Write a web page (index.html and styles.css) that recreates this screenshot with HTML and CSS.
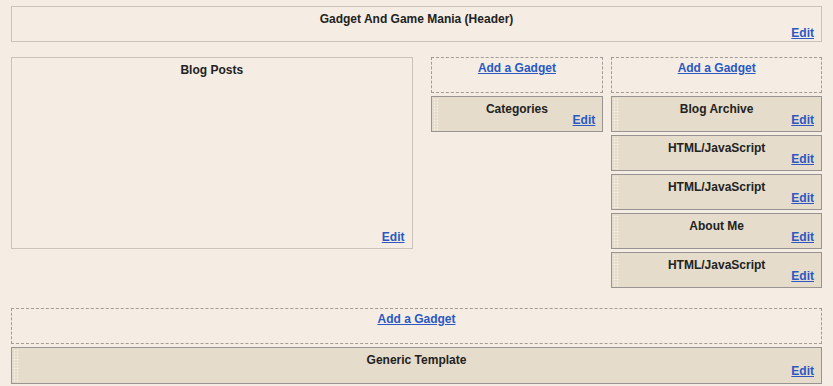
FILE: index.html
```html
<!DOCTYPE html>
<html>
<head>
<meta charset="utf-8">
<link rel="stylesheet" href="styles.css">
</head>
<body>
<div class="page">
  <div class="section header">
    <div class="title">Gadget And Game Mania (Header)</div>
    <div class="edit-row"><a class="edit" href="#">Edit</a></div>
  </div>
  <div class="main">
    <div class="section posts">
      <div class="title">Blog Posts</div>
      <div class="edit-row"><a class="edit" href="#">Edit</a></div>
    </div>
    <div class="col mid">
      <div class="add"><a href="#">Add a Gadget</a></div>
      <div class="widget"><div class="title">Categories</div><div class="edit-row"><a class="edit" href="#">Edit</a></div></div>
    </div>
    <div class="col side">
      <div class="add"><a href="#">Add a Gadget</a></div>
      <div class="widget"><div class="title">Blog Archive</div><div class="edit-row"><a class="edit" href="#">Edit</a></div></div>
      <div class="widget"><div class="title">HTML/JavaScript</div><div class="edit-row"><a class="edit" href="#">Edit</a></div></div>
      <div class="widget"><div class="title">HTML/JavaScript</div><div class="edit-row"><a class="edit" href="#">Edit</a></div></div>
      <div class="widget"><div class="title">About Me</div><div class="edit-row"><a class="edit" href="#">Edit</a></div></div>
      <div class="widget"><div class="title">HTML/JavaScript</div><div class="edit-row"><a class="edit" href="#">Edit</a></div></div>
    </div>
  </div>
  <div class="footer">
    <div class="add"><a href="#">Add a Gadget</a></div>
    <div class="widget"><div class="title">Generic Template</div><div class="edit-row"><a class="edit" href="#">Edit</a></div></div>
  </div>
</div>
</body>
</html>
```
FILE: styles.css
```css
html, body {
  margin: 0;
  padding: 0;
  background: #f5ede4;
}
body {
  font-family: "Liberation Sans", Arial, sans-serif;
  font-size: 12px;
  font-weight: bold;
  color: #222;
  width: 833px;
  height: 386px;
  overflow: hidden;
}
.page {
  padding: 6px 11px 0 11px;
}
a {
  color: #2b58c2;
  text-decoration: underline;
}
.title {
  text-align: center;
  line-height: 14px;
}
.edit-row {
  text-align: right;
  line-height: 14px;
}
.section {
  border: 1px solid #cbc3bb;
  box-sizing: border-box;
  padding: 5px 7px 0 7px;
  display: flex;
  flex-direction: column;
  justify-content: space-between;
}
.header {
  height: 36px;
  padding-bottom: 3px;
}
.main {
  display: flex;
  align-items: flex-start;
  margin-top: 15px;
}
.posts {
  width: 402px;
  height: 192px;
  padding-bottom: 4px;
}
.col {
  display: flex;
  flex-direction: column;
  gap: 3px;
}
.mid {
  width: 173px;
  margin-left: 18px;
}
.side {
  width: 211px;
  margin-left: 8px;
}
.add {
  border: 1px dashed #a29c96;
  box-sizing: border-box;
  height: 36px;
  padding-top: 3px;
  text-align: center;
  line-height: 14px;
}
.widget {
  position: relative;
  background: #e5dccb;
  border: 1px solid #989491;
  box-sizing: border-box;
  height: 36px;
  padding: 5px 7px 0 7px;
}
.widget .edit-row {
  margin-top: -3px;
}
.widget::before {
  content: "";
  position: absolute;
  left: 1px;
  top: 1px;
  bottom: 1px;
  width: 6px;
  background-image: radial-gradient(circle, #f6f1ea 0.7px, transparent 1.1px);
  background-size: 3px 3px;
}
.footer {
  margin-top: 20px;
  display: flex;
  flex-direction: column;
  gap: 3px;
}
.footer .add {
  height: 36px;
}
.footer .widget {
  height: 37px;
}
```
